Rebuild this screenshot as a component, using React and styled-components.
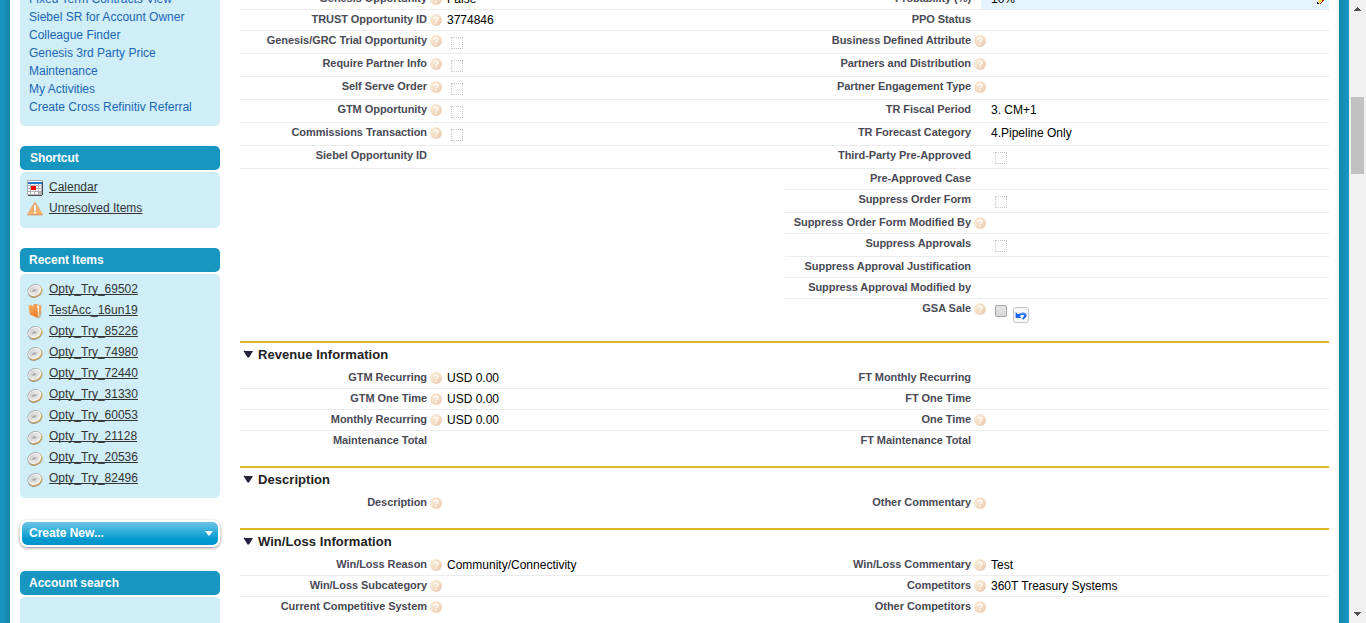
import React from 'react';
import styled, { createGlobalStyle } from 'styled-components';

const GlobalStyle = createGlobalStyle`
  html, body { margin: 0; height: 100%; overflow: hidden; background: #1797c0; }
  body { font-family: "Liberation Sans", Arial, Helvetica, sans-serif; font-size: 12px; color: #000; }
`;

const Page = styled.div`
  display: flex;
  height: 623px;
  overflow: hidden;
  background: #1797c0;
`;

const Edge = styled.div`
  flex: 0 0 10px;
  background: linear-gradient(${(p) => (p.$side === 'left' ? 'to left' : 'to right')}, #1683a8, #1797c0 8px);
`;

const Sheet = styled.div`
  flex: 1;
  display: flex;
  gap: 20px;
  padding: 0 10px;
  background: #fff;
  min-width: 0;
`;

const Sidebar = styled.aside`
  flex: 0 0 200px;
  margin-top: -10px;
`;

const Panel = styled.div`
  background: #cfeef8;
  border-radius: ${(p) => (p.$open ? '0 0 5px 5px' : '5px')};
  padding: ${(p) => p.$pad || '5px 7px 9px'};
  margin-bottom: 20px;
  min-height: ${(p) => p.$min || 0}px;
`;

const PanelTitle = styled.h2`
  margin: 0 0 2px;
  height: 24px;
  line-height: 24px;
  padding-left: ${(p) => p.$indent || 9}px;
  border-radius: 5px;
  background: #1797c0;
  color: #fff;
  font-size: 12px;
  font-weight: bold;
  letter-spacing: ${(p) => p.$track || 0}px;
`;

const SideLink = styled.a`
  display: block;
  height: 18px;
  line-height: 18px;
  color: #1b66b3;
  white-space: nowrap;
`;

const Item = styled.div`
  display: flex;
  align-items: center;
  height: 21px;
  gap: 6px;

  svg { flex: none; margin-top: 1px; }
`;

const ItemLink = styled.a`
  color: #333;
  text-decoration: underline;
  text-decoration-thickness: 1px;
  text-decoration-skip-ink: none;
  text-underline-offset: 1px;
  line-height: 20px;
  height: 21px;
  white-space: nowrap;
`;

const CreateButton = styled.div`
  display: flex;
  align-items: center;
  justify-content: space-between;
  box-sizing: border-box;
  height: 27px;
  margin: 22px 0 24px;
  padding: 0 5px 2px 7px;
  border: 2px solid #fff;
  border-radius: 7px;
  background: linear-gradient(#6cc6e6, #0099cf 75%, #0094ca) padding-box;
  box-shadow: 0 1px 3px rgba(0, 0, 0, 0.45);
  color: #fff;
  font-weight: bold;

  svg { margin-top: 2px; }
`;

const Main = styled.main`
  flex: 1;
  margin-top: -11px;
  min-width: 0;
`;

const Section = styled.section`
  border-top: ${(p) => (p.$first ? '0' : '2px solid #ddb929')};
  padding-bottom: 15px;
`;

const Heading = styled.h3`
  display: flex;
  align-items: center;
  gap: 5px;
  margin: 0;
  height: 25px;
  padding: 0 0 2px 3px;
  box-sizing: border-box;
  color: #222;
  font-size: 13px;
  line-height: 23px;
  letter-spacing: 0.05px;

  svg { margin-top: -1px; }
`;

const Columns = styled.div`
  display: grid;
  grid-template-columns: 545px 544px;
`;

const Row = styled.div`
  display: grid;
  grid-template-columns: ${(p) => (p.$right ? 186 : 187)}px 19px 1fr;
  box-sizing: border-box;
  height: ${(p) => p.$h}px;
  border-bottom: ${(p) => (p.$last ? '0' : '1px solid #ececec')};
`;

const Label = styled.div`
  text-align: right;
  font-size: 11px;
  font-weight: bold;
  color: #4a4a56;
  line-height: 19px;
  white-space: nowrap;
  letter-spacing: -0.06px;
`;

const HelpCell = styled.div`
  padding: 4px 0 0 3px;
  svg { display: block; }
`;

const Value = styled.div`
  display: flex;
  align-items: flex-start;
  line-height: 20px;
  padding-left: 1px;
  color: #000;
`;

const EditableValue = styled.div`
  display: flex;
  justify-content: space-between;
  line-height: 20px;
  margin-left: -9px;
  padding: 0 5px 0 10px;
  background: #e3f3ff;
`;

const DottedBox = styled.span`
  box-sizing: border-box;
  width: 12px;
  height: 12px;
  margin: 6px 0 0 4px;
  border: 1px dotted #c8c8c8;
`;

const CheckBox = styled.span`
  box-sizing: border-box;
  width: 12px;
  height: 12px;
  margin: 6px 0 0 4px;
  border: 1px solid #a3a3a3;
  border-radius: 2px;
  background: linear-gradient(#e6e6e6, #d8d8d8);
`;

const UndoButton = styled.span`
  display: flex;
  align-items: center;
  justify-content: center;
  box-sizing: border-box;
  width: 16px;
  height: 16px;
  margin: 8px 0 0 6px;
  border: 1px solid #c4c4c4;
  border-radius: 3px;
  background: #f8f8fa;
`;

const ScrollTrack = styled.div`
  flex: 0 0 17px;
  display: flex;
  flex-direction: column;
  align-items: center;
  background: #f1f1f1;

  svg { flex: none; display: block; }
`;

const ScrollThumb = styled.div`
  width: 13px;
  height: 77px;
  margin: 80px 0 auto;
  background: #c1c1c1;
`;

const HelpIcon = () => (
  <svg width="12" height="12" viewBox="0 0 12 12">
    <defs>
      <linearGradient id="help" x1="0" y1="0" x2="1" y2="1">
        <stop offset="0" stopColor="#f9efda" />
        <stop offset="0.55" stopColor="#f3dcc4" />
        <stop offset="1" stopColor="#e6c1ab" />
      </linearGradient>
    </defs>
    <circle cx="6" cy="6" r="6" fill="url(#help)" />
    <path d="M4.2 4.7C4.2 2.5 7.9 2.5 7.9 4.6C7.9 5.9 6.2 5.8 6.2 7.3M6.2 8.4V9.7" fill="none" stroke="#fff" strokeWidth="1.3" />
  </svg>
);

const CoinIcon = () => (
  <svg width="16" height="16" viewBox="0 0 16 16">
    <defs>
      <linearGradient id="coin" x1="0" y1="0" x2="1" y2="1">
        <stop offset="0" stopColor="#c4c4c4" />
        <stop offset="0.5" stopColor="#e4e4e4" />
        <stop offset="1" stopColor="#dcdcda" />
      </linearGradient>
    </defs>
    <ellipse cx="8.3" cy="9.9" rx="7.4" ry="5.6" transform="rotate(-28 8.3 9.9)" fill="#8c8c8c" />
    <ellipse cx="8.4" cy="9.1" rx="7.3" ry="5.6" transform="rotate(-28 8.4 9.1)" fill="#dfa950" />
    <ellipse cx="7.4" cy="8.1" rx="7.2" ry="5.8" transform="rotate(-28 7.4 8.1)" fill="#a2a2a2" />
    <ellipse cx="7.7" cy="8.4" rx="6.8" ry="5.3" transform="rotate(-28 7.7 8.4)" fill="#f6f6f4" />
    <ellipse cx="7.5" cy="8.3" rx="5.6" ry="4.2" transform="rotate(-28 7.5 8.3)" fill="url(#coin)" />
    <path d="M4.8 8.2L6.2 8.6L6.9 6.4L8 7.8L9.8 7L9 9.2L5.5 10.1Z" fill="#aaa" />
  </svg>
);

const FolderIcon = () => (
  <svg width="16" height="16" viewBox="0 0 16 16">
    <defs>
      <linearGradient id="folder" x1="0" y1="0" x2="0.4" y2="1">
        <stop offset="0" stopColor="#f9ad60" />
        <stop offset="1" stopColor="#ee7f2c" />
      </linearGradient>
    </defs>
    <path d="M10.5 15.6L13.5 14.6L15 9L13.5 7Z" fill="#8fa3a8" opacity="0.6" />
    <path d="M6 2L7 1L10 1.2L14 2.4L13.2 11.5L11 14.5Z" fill="#e99a4c" />
    <path d="M9.6 2.6L12.4 2.4L12 12.6L10.8 14Z" fill="#f6ead8" />
    <path d="M12.6 2L14.6 2.8L13.4 11.6L11.6 14.2Z" fill="#eda25a" />
    <path d="M1.6 2.6L4.6 2L5.6 3.2L10.4 4L10.8 15L2.9 11.6Z" fill="url(#folder)" />
  </svg>
);

const CalendarIcon = () => (
  <svg width="16" height="16" viewBox="0 0 16 16" shapeRendering="crispEdges">
    <rect width="16" height="15" fill="#a8a8a8" />
    <rect x="1" y="1" width="14" height="1" fill="#fff" />
    <rect x="1" y="2" width="14" height="2" fill="#1c79c9" />
    <rect x="1" y="4" width="14" height="11" fill="#b4b4b4" />
    <path d="M1 4h2v1H1zM4 4h3v1H4zM8 4h3v1H8zM12 4h2v1h-2zM1 6h2v2H1zM9 6h2v2H9zM12 6h2v2h-2zM1 9h2v2H1zM9 9h2v2H9zM12 9h2v2h-2zM4 10h4v1H4zM1 12h2v2H1zM4 12h3v2H4zM8 12h3v2H8z" fill="#fff" />
    <rect x="4" y="6" width="5" height="4" fill="#f20000" />
    <path d="M15 2h1v13h-1zM1 15h14v1H1z" fill="#4c4c4c" />
  </svg>
);

const WarningIcon = () => (
  <svg width="16" height="16" viewBox="0 0 16 16">
    <defs>
      <linearGradient id="warn" x1="0" y1="0" x2="0" y2="1">
        <stop offset="0" stopColor="#e5a574" />
        <stop offset="1" stopColor="#fbb466" />
      </linearGradient>
    </defs>
    <path d="M8 1.2Q8.8 1.2 9.4 2.4L15.7 13Q16 14.2 15 14.2H1Q0 14.2 .3 13L6.6 2.4Q7.2 1.2 8 1.2Z" fill="url(#warn)" />
    <path d="M.3 13.2H15.7V14.3H.3Z" fill="#cf9d78" />
    <path d="M8 4.2V9.4M8 10.6V12.6" stroke="#fff" strokeWidth="2" />
  </svg>
);

const ArrowDown = () => (
  <svg width="8" height="5" viewBox="0 0 8 5"><path d="M0 0H8L4 5Z" fill="#fff" /></svg>
);

const Twisty = () => (
  <svg width="10" height="8" viewBox="0 0 10 8">
    <path d="M.5 1H10L6 7.6H4.6Z" fill="#23233f" />
    <path d="M1 0H2V1H1Z" fill="#bbb" />
  </svg>
);

const UndoIcon = () => (
  <svg width="12" height="12" viewBox="0 0 12 12">
    <path d="M.6 3V9H6.4L4.8 7.2Q7.4 5 9 6.3Q9.4 7.8 7 9.2L8.4 10.8Q12 8.2 11.7 5.6Q9.6 1.6 3 5.2Z" fill="#1c66e8" />
    <path d="M5 4.9Q8.8 3.1 10.9 5.6" fill="none" stroke="#6ea6ff" />
  </svg>
);

const PencilTip = () => (
  <svg width="7" height="20" viewBox="0 0 7 20" shapeRendering="crispEdges">
    <path d="M2 11H6V12H5V13H3V14H2Z" fill="#ffd93b" />
    <path d="M5 11H7V12H6V13H5V14H4V15H3V14H4V13H5Z" fill="#b01818" />
    <path d="M0 13H1V14H2V15H0Z" fill="#000" />
    <path d="M1 12H2V13H1ZM2 14H3V15H2Z" fill="#e8c8a0" />
  </svg>
);

const ScrollArrow = ({ down }) => (
  <svg width="17" height="17" viewBox="0 0 17 17" shapeRendering="crispEdges">
    <path
      d={down ? 'M5 6h7v1H5zM6 7h5v1H6zM7 8h3v1H7zM8 9h1v1H8z' : 'M8 7h1v1H8zM7 8h3v1H7zM6 9h5v1H6zM5 10h7v1H5z'}
      fill="#505050"
    />
  </svg>
);

const Field = ({ f, right, last }) => {
  const [label, o = {}] = f;
  return (
    <Row $right={right} $h={o.h || (last ? 20 : 21)} $last={last}>
      <Label>{label}</Label>
      <HelpCell>{o.help && <HelpIcon />}</HelpCell>
      {o.edit ? (
        <EditableValue><span>{o.v}</span><PencilTip /></EditableValue>
      ) : (
        <Value>
          {o.v}
          {o.box && <DottedBox />}
          {o.undo && <><CheckBox /><UndoButton><UndoIcon /></UndoButton></>}
        </Value>
      )}
    </Row>
  );
};

const sections = [
  {
    left: [
      ['Genesis Opportunity', { help: 1, v: 'False' }],
      ['TRUST Opportunity ID', { help: 1, v: '3774846' }],
      ['Genesis/GRC Trial Opportunity', { help: 1, box: 1, h: 23 }],
      ['Require Partner Info', { help: 1, box: 1, h: 23 }],
      ['Self Serve Order', { help: 1, box: 1, h: 23 }],
      ['GTM Opportunity', { help: 1, box: 1, h: 23 }],
      ['Commissions Transaction', { help: 1, box: 1, h: 23 }],
      ['Siebel Opportunity ID', { h: 23 }],
    ],
    keepLeftRule: true,
    right: [
      ['Probability (%)', { v: '10%', edit: 1 }],
      ['PPO Status'],
      ['Business Defined Attribute', { help: 1, h: 23 }],
      ['Partners and Distribution', { help: 1, h: 23 }],
      ['Partner Engagement Type', { help: 1, h: 23 }],
      ['TR Fiscal Period', { v: '3. CM+1', h: 23 }],
      ['TR Forecast Category', { v: '4.Pipeline Only', h: 23 }],
      ['Third-Party Pre-Approved', { box: 1, h: 23 }],
      ['Pre-Approved Case'],
      ['Suppress Order Form', { box: 1, h: 23 }],
      ['Suppress Order Form Modified By', { help: 1 }],
      ['Suppress Approvals', { box: 1, h: 23 }],
      ['Suppress Approval Justification'],
      ['Suppress Approval Modified by'],
      ['GSA Sale', { help: 1, undo: 1, h: 27 }],
    ],
  },
  {
    title: 'Revenue Information',
    left: [
      ['GTM Recurring', { help: 1, v: 'USD 0.00' }],
      ['GTM One Time', { help: 1, v: 'USD 0.00' }],
      ['Monthly Recurring', { help: 1, v: 'USD 0.00' }],
      ['Maintenance Total'],
    ],
    right: [['FT Monthly Recurring'], ['FT One Time'], ['One Time', { help: 1 }], ['FT Maintenance Total']],
  },
  {
    title: 'Description',
    left: [['Description', { help: 1 }]],
    right: [['Other Commentary', { help: 1 }]],
  },
  {
    title: 'Win/Loss Information',
    left: [
      ['Win/Loss Reason', { help: 1, v: 'Community/Connectivity' }],
      ['Win/Loss Subcategory', { help: 1 }],
      ['Current Competitive System', { help: 1, h: 21 }],
    ],
    right: [
      ['Win/Loss Commentary', { help: 1, v: 'Test' }],
      ['Competitors', { help: 1, v: '360T Treasury Systems' }],
      ['Other Competitors', { help: 1, h: 21 }],
    ],
  },
];

const links = [
  'Fixed Term Contracts View', 'Siebel SR for Account Owner', 'Colleague Finder', 'Genesis 3rd Party Price',
  'Maintenance', 'My Activities', 'Create Cross Refinitiv Referral',
];

const recent = [
  'Opty_Try_69502', 'TestAcc_16un19', 'Opty_Try_85226', 'Opty_Try_74980', 'Opty_Try_72440',
  'Opty_Try_31330', 'Opty_Try_60053', 'Opty_Try_21128', 'Opty_Try_20536', 'Opty_Try_82496',
];

export default function App() {
  return (
    <>
      <GlobalStyle />
      <Page>
        <Edge $side="left" />
        <Sheet>
          <Sidebar>
            <Panel $open $pad="0 9px 10px">
              {links.map((l) => <SideLink key={l}>{l}</SideLink>)}
            </Panel>
            <PanelTitle $indent={10} $track={-0.1}>Shortcut</PanelTitle>
            <Panel>
              <Item><CalendarIcon /><ItemLink>Calendar</ItemLink></Item>
              <Item><WarningIcon /><ItemLink>Unresolved Items</ItemLink></Item>
            </Panel>
            <PanelTitle>Recent Items</PanelTitle>
            <Panel>
              {recent.map((r) => (
                <Item key={r}>{r.startsWith('Test') ? <FolderIcon /> : <CoinIcon />}<ItemLink>{r}</ItemLink></Item>
              ))}
            </Panel>
            <CreateButton>Create New...<ArrowDown /></CreateButton>
            <PanelTitle>Account search</PanelTitle>
            <Panel $min={60} />
          </Sidebar>
          <Main>
            {sections.map((s, i) => (
              <Section key={i} $first={!s.title}>
                {s.title && <Heading><Twisty />{s.title}</Heading>}
                <Columns>
                  <div>
                    {s.left.map((f, n) => (
                      <Field key={f[0]} f={f} last={!s.keepLeftRule && n === s.left.length - 1} />
                    ))}
                  </div>
                  <div>
                    {s.right.map((f, n) => <Field key={f[0]} f={f} right last={n === s.right.length - 1} />)}
                  </div>
                </Columns>
              </Section>
            ))}
          </Main>
        </Sheet>
        <Edge $side="right" />
        <ScrollTrack>
          <ScrollArrow />
          <ScrollThumb />
          <ScrollArrow down />
        </ScrollTrack>
      </Page>
    </>
  );
}
